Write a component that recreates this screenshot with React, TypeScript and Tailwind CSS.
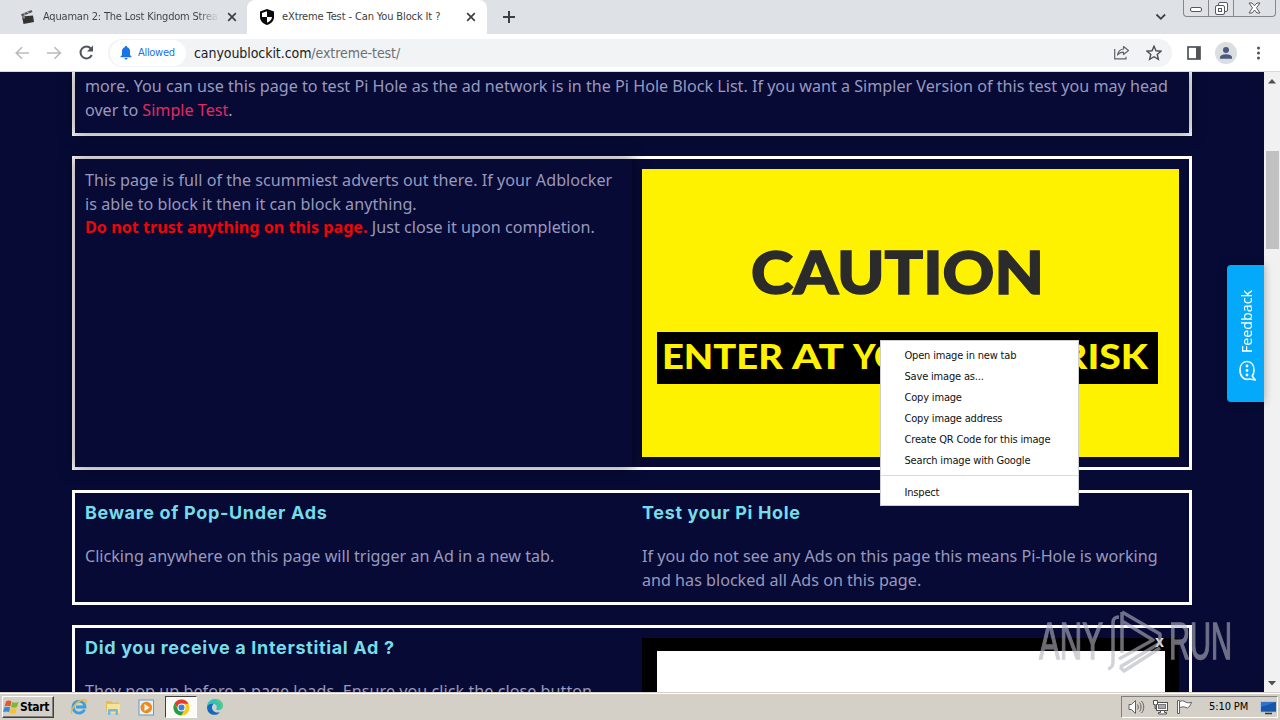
import type { ReactNode } from 'react';

const menuItems = [
  'Open image in new tab',
  'Save image as...',
  'Copy image',
  'Copy image address',
  'Create QR Code for this image',
  'Search image with Google',
];

function Clapper() {
  return (
    <svg width="16" height="16" viewBox="0 0 16 16">
      <path d="M2 7.500 13 6.500 14 13 3.500 15Z" fill="#333" />
      <path d="M1 5.200 11.500 1 12.500 3 2 7.400Z" fill="#555" />
      <path d="m3.500 4.300 2 1.500M7 2.900l2 1.500" stroke="#c9ccd1" strokeWidth="1" />
      <path d="M2 7.700 5 7.400 4.500 10Z" fill="#999" />
    </svg>
  );
}

function Shield() {
  return (
    <svg width="16" height="18" viewBox="0 0 16 18">
      <path d="M8 1 15 3.500V9c0 4-3 6.600-7 8-4-1.400-7-4-7-8V3.500Z" fill="#0a0a0a" />
      <path d="M8 3.200V9H3V5ZM8 9h5c-.3 2.800-2.200 4.600-5 5.800Z" fill="#fff" />
    </svg>
  );
}

function Cross() {
  return (
    <svg width="10" height="10" viewBox="0 0 10 10" stroke="#3c4043" strokeWidth="1.700">
      <path d="m1.200 1.200 7.600 7.600M8.800 1.200 1.200 8.800" />
    </svg>
  );
}

function Tabs() {
  return (
    <div className="flex h-[34px] bg-[#dee1e6] text-[11px] text-[#3c4043]">
      <div className="flex w-[247px] items-center pl-5">
        <Clapper />
        <span className="ml-[7px] w-[176px] overflow-hidden whitespace-nowrap bg-gradient-to-r from-[#3c4043] from-88% to-transparent bg-clip-text pt-px tracking-[-0.2px] text-transparent">
          Aquaman 2: The Lost Kingdom Strea
        </span>
        <span className="ml-[8px]">
          <Cross />
        </span>
      </div>
      <div className="flex w-[240px] items-center rounded-t-[8px] bg-white pl-3">
        <Shield />
        <span className="ml-[7px] w-[184px] whitespace-nowrap pt-px tracking-[-0.12px]">eXtreme Test - Can You Block It ?</span>
        <Cross />
      </div>
      <div className="flex flex-1 items-center pl-[15px]">
        <svg width="14" height="14" viewBox="0 0 14 14" stroke="#3c4043" strokeWidth="2">
          <path d="M7 1v12M1 7h12" />
        </svg>
      </div>
      <div className="flex w-[28px] items-center">
        <svg width="12" height="8" viewBox="0 0 12 8" fill="none" stroke="#3c4043" strokeWidth="1.800">
          <path d="m1.500 1.500 4.300 4.300 4.300-4.300" />
        </svg>
      </div>
      <div className="mr-1 flex h-[17px] w-[93px] rounded-b-[4px] border border-t-0 border-[#85878b]">
        <div className="flex w-[25px] items-end justify-center border-r border-[#85878b] pb-[3px]">
          <svg width="13" height="6" viewBox="0 0 13 6">
            <rect x=".5" y=".5" width="11" height="4" rx="1.500" fill="#fff" stroke="#55585c" />
          </svg>
        </div>
        <div className="flex w-[25px] items-center justify-center border-r border-[#85878b]">
          <svg width="13" height="13" viewBox="0 0 13 13" stroke="#55585c" fill="#fff">
            <rect x="3.500" y=".5" width="9" height="9" rx="1.500" />
            <rect x=".5" y="3.500" width="9" height="9" rx="1.500" />
            <rect x="3.500" y="6.500" width="3" height="3" />
          </svg>
        </div>
        <div className="flex flex-1 items-center justify-center">
          <svg width="13" height="12" viewBox="0 0 13 12">
            <path d="m1 1 3 0 2.500 2.800L9 1h3L8.500 5.800 12 11H9L6.500 8 4 11H1l3.500-5.200Z" fill="#fff" stroke="#55585c" strokeLinejoin="round" />
          </svg>
        </div>
      </div>
    </div>
  );
}

function Toolbar() {
  return (
    <div className="flex h-[38px] items-center border-b border-[#d5d8dc] bg-white">
      <svg className="ml-[15px]" width="15" height="14" viewBox="0 0 15 14" fill="none" stroke="#b8babd" strokeWidth="1.600">
        <path d="M14 7H1.500M7 1.200 1.200 7 7 12.800" />
      </svg>
      <svg className="ml-[17px]" width="15" height="14" viewBox="0 0 15 14" fill="none" stroke="#b8babd" strokeWidth="1.600">
        <path d="M0 7h13M7.500 1.200 13.300 7l-5.800 5.800" />
      </svg>
      <svg className="ml-[17px]" width="15" height="15" viewBox="0 0 15 15" fill="none" stroke="#505357" strokeWidth="2">
        <path d="M12.800 10A5.900 5.900 0 1 1 11.800 3.500" />
        <path d="M14 .5v6H8Z" fill="#505357" stroke="none" />
      </svg>
      <div className="ml-[14px] flex h-[28px] w-[1064px] items-center rounded-full bg-[#f1f3f4] pl-[2px]">
        <div className="flex h-[26px] w-[76px] items-center rounded-full bg-white pl-[10px]">
          <svg width="12" height="14" viewBox="0 0 12 14" fill="#1a73e8">
            <path d="M6 0c.8 0 1.200.5 1.200 1.200C9 1.700 10 3.200 10 5v4l1.500 1.600v.6H.5v-.6L2 9V5c0-1.800 1-3.300 2.800-3.800C4.800.5 5.200 0 6 0ZM4.500 12h3a1.500 1.500 0 0 1-3 0Z" />
          </svg>
          <span className="ml-[6px] pt-px text-[11px] tracking-[-0.3px] text-[#1a73e8]">Allowed</span>
        </div>
        <div className="ml-[8px] flex-1 pt-px text-[14px] tracking-[-0.07px] text-[#202124]">
          canyoublockit.com<span className="text-[#6b6f74]">/extreme-test/</span>
        </div>
        <svg className="mr-[16px]" width="16" height="15" viewBox="0 0 16 15" fill="none" stroke="#5f6368" strokeWidth="1.200">
          <path d="M.7 4v9.800h11.300v-2" />
          <path d="M9.500 1.500 14.500 5.500l-5 4v-2.300c-2.800 0-4.500.8-6 2.800.5-3.200 2.600-5.500 6-6Z" strokeLinejoin="round" />
        </svg>
        <svg className="mr-[10px]" width="16" height="16" viewBox="0 0 16 16" fill="none" stroke="#4b4e52" strokeWidth="1.400">
          <path d="m8 1.200 2 4.600 5 .4-3.800 3.200 1.200 4.900L8 11.700l-4.400 2.600 1.200-4.900L1 6.200l5-.4Z" />
        </svg>
      </div>
      <svg className="ml-[15px]" width="14" height="14" viewBox="0 0 14 14">
        <rect x="1" y="1" width="12" height="12" fill="#fff" stroke="#505357" strokeWidth="1.700" />
        <path d="M9 1h4v12H9Z" fill="#505357" />
      </svg>
      <svg className="ml-[14px]" width="22" height="22" viewBox="0 0 22 22">
        <circle cx="11" cy="11" r="11" fill="#dadde2" />
        <circle cx="11" cy="8" r="3" fill="#4a5a7d" />
        <path d="M5 16.800v-1.500C5 13 9 12.200 11 12.200s6 .8 6 3.100v1.500Z" fill="#4a5a7d" />
      </svg>
      <svg className="ml-[19px]" width="5" height="14" viewBox="0 0 5 14" fill="#505357">
        <circle cx="2.500" cy="2" r="1.500" />
        <circle cx="2.500" cy="7" r="1.500" />
        <circle cx="2.500" cy="12" r="1.500" />
      </svg>
    </div>
  );
}

function Heading({ children }: { children: ReactNode }) {
  return (
    <h2 className="h-[20px] whitespace-nowrap font-[Inter] text-[18px] leading-[20px] font-bold tracking-[0.66px] text-[#75dcea]">
      {children}
    </h2>
  );
}

function Poster() {
  return (
    <svg width="537" height="288" viewBox="0 0 537 288" className="block font-[Lato] font-black">
      <rect width="537" height="288" fill="#fff200" />
      <text x="109" y="124.500" fontSize="59" textLength="293" lengthAdjust="spacingAndGlyphs" fill="#2b2b2b" stroke="#2b2b2b" strokeWidth="1.500">
        CAUTION
      </text>
      <rect x="15" y="163" width="501" height="52" fill="#000" />
      <g fill="#fff200" fontSize="33.500">
        <text x="20" y="200" textLength="121" lengthAdjust="spacingAndGlyphs">ENTER</text>
        <text x="150" y="200" textLength="52" lengthAdjust="spacingAndGlyphs">AT</text>
        <text x="211" y="200" textLength="97" lengthAdjust="spacingAndGlyphs">YOUR</text>
        <text x="318" y="200" textLength="86" lengthAdjust="spacingAndGlyphs">OWN</text>
        <text x="420" y="200" textLength="86" lengthAdjust="spacingAndGlyphs">RISK</text>
      </g>
    </svg>
  );
}

function ContextMenu() {
  return (
    <div className="absolute top-[340px] left-[880px] h-[166px] w-[199px] border border-[#cfcfcf] bg-white pt-1 text-[11px] tracking-[-0.18px] text-[#111]">
      {menuItems.map((item) => (
        <div key={item} className="h-[21px] pl-[23.500px] leading-[22px]">
          {item}
        </div>
      ))}
      <div className="mt-[4px] mb-[5px] h-px bg-[#dadada]" />
      <div className="h-[21px] pl-[23.500px] leading-[23px]">Inspect</div>
    </div>
  );
}

function Watermark() {
  return (
    <svg className="absolute top-[606px] left-[1034px] opacity-60" width="202" height="70" viewBox="0 0 202 70">
      <g className="font-['Liberation_Sans']" fill="#b4b4bf" stroke="#b4b4bf" strokeWidth="1.500" fontSize="51">
        <text x="5" y="53" textLength="64" lengthAdjust="spacingAndGlyphs">ANY</text>
        <text x="135" y="53" textLength="63" lengthAdjust="spacingAndGlyphs">RUN</text>
      </g>
      <g fill="none" stroke="#b4b4bf" strokeWidth="3.500" strokeLinejoin="round">
        <path d="M85 11c-5 0-6 2-6 6v38c0 5-1 7-5 8" />
        <path d="M88 6v41M88 6l38 22v9L86 61M88 15l31 19-34 19M86 61l4 4 36-23" />
      </g>
    </svg>
  );
}

function Page() {
  return (
    <div className="flex h-[620px] overflow-hidden">
      <main className="flex w-[1264px] flex-col bg-[#070a35] pl-[72px] font-['Noto_Sans'] text-[16.140px] leading-[23.800px] text-[#9999bd]">
        <section className="h-[64px] w-[1120px] shrink-0 border-[3px] border-t-0 border-white">
          <div className="h-[61px] pt-[3px] pl-[10px] whitespace-nowrap shadow-[0_0_14px_2px_rgba(0,0,0,0.4)]">
            <p>more. You can use this page to test Pi Hole as the ad network is in the Pi Hole Block List. If you want a Simpler Version of this test you may head</p>
            <p>
              over to <span className="text-[#e02a62]">Simple Test</span>.
            </p>
          </div>
        </section>
        <section className="mt-[20px] flex h-[314px] w-[1120px] shrink-0 border-[3px] border-white">
          <div className="w-[557px] pt-[10px] pl-[10px] tracking-[0.02px] whitespace-nowrap shadow-[0_0_14px_2px_rgba(0,0,0,0.4)]">
            <p>This page is full of the scummiest adverts out there. If your Adblocker</p>
            <p>is able to block it then it can block anything.</p>
            <p className="leading-[21px]">
              <b className="text-[#f00505]">Do not trust anything on this page.</b> Just close it upon completion.
            </p>
          </div>
          <div className="flex-1 pt-[10px] pl-[10px]">
            <Poster />
          </div>
        </section>
        <section className="mt-[20px] flex h-[115px] w-[1120px] shrink-0 border-[3px] border-white pt-[10px] pl-[10px] whitespace-nowrap">
          <div className="w-[557px]">
            <Heading>Beware of Pop-Under Ads</Heading>
            <p className="mt-[22px]">Clicking anywhere on this page will trigger an Ad in a new tab.</p>
          </div>
          <div>
            <Heading>Test your Pi Hole</Heading>
            <p className="mt-[22px]">If you do not see any Ads on this page this means Pi-Hole is working</p>
            <p>and has blocked all Ads on this page.</p>
          </div>
        </section>
        <section className="mt-[20px] flex h-[300px] w-[1120px] shrink-0 border-[3px] border-white pt-[10px] pl-[10px] whitespace-nowrap">
          <div className="w-[557px]">
            <Heading>Did you receive a Interstitial Ad ?</Heading>
            <p className="mt-[22px] tracking-[0.04px]">They pop up before a page loads. Ensure you click the close button</p>
          </div>
          <div className="relative h-[290px] w-[537px] bg-black pt-[13px] pl-[15px]">
            <div className="h-[270px] w-[508px] bg-white" />
            <span className="absolute top-[-8px] left-[513px] font-['Liberation_Sans'] text-[16px] font-bold text-[#e8e8e8]">x</span>
          </div>
        </section>
      </main>
      <div className="flex w-4 flex-col items-center bg-[#f1f1f1]">
        <svg className="mt-[7px]" width="8" height="5" viewBox="0 0 8 5" fill="#505050">
          <path d="M4 0 8 4.500H0Z" />
        </svg>
        <div className="mt-[67px] h-[98px] w-[13px] bg-[#c1c1c1]" />
        <svg className="mt-auto mb-[6px]" width="8" height="5" viewBox="0 0 8 5" fill="#505050">
          <path d="M4 4.500 8 0H0Z" />
        </svg>
      </div>
    </div>
  );
}

function Feedback() {
  return (
    <div className="absolute top-[265px] left-[1227px] flex h-[137px] w-[37px] flex-col items-center rounded-l-[4px] bg-[#04a9fb] pt-[24px] font-['Noto_Sans'] text-[14.200px] leading-[20px] text-white shadow-[0_0_8px_rgba(0,0,0,0.35)]">
      <span className="ml-[3px] h-[64px] rotate-180 [writing-mode:vertical-rl]">Feedback</span>
      <svg className="mt-[7px] ml-[3px]" width="19" height="22" viewBox="0 0 19 22" fill="none" stroke="#fff" strokeWidth="1.600">
        <path d="M9 1.500c4.300 0 7 3.600 7 8.500 0 2.500-.6 4.500-1.800 6l3 4-5.500-1c-5.500 1.600-9.700-2.200-9.700-9 0-4.900 2.700-8.500 7-8.500Z" strokeLinejoin="round" />
        <g fill="#fff" stroke="none">
          <circle cx="9" cy="6" r="1.400" />
          <circle cx="9" cy="10.500" r="1.400" />
          <circle cx="9" cy="15" r="1.400" />
        </g>
      </svg>
    </div>
  );
}

function Taskbar() {
  return (
    <div className="flex h-[28px] border-t border-[#d4d0c8] bg-[#d4d0c8] text-[11px] text-black">
      <div className="flex flex-1 items-center border-t border-white">
        <div className="ml-[2px] flex h-[22px] w-[52px] items-center border border-t-white border-r-[#404040] border-b-[#404040] border-l-white shadow-[inset_-1px_-1px_0_#808080]">
          <svg width="17" height="16" viewBox="0 0 17 16">
            <path d="M3 2.500C5 1 7 1.500 8.500 2.500L7.300 7.500C5.500 6.500 3.500 6.500 1.500 7.500Z" fill="#e8562a" />
            <path d="M9.300 3c2 1 4 1 6.200 0L14 8c-2 1-4 1-6 0Z" fill="#7ab83a" />
            <path d="M1.300 8.400c2-1 4-1 5.900 0L6 13.300c-2-1-4-1-6 0Z" fill="#3a88d8" />
            <path d="M7.900 9c2 1 4 1 6 0l-1.300 5c-2 1-4 1-6 0Z" fill="#f8c22e" />
          </svg>
          <b className="text-[12px] tracking-[-0.3px]">Start</b>
        </div>
        <svg className="ml-[16px]" width="18" height="18" viewBox="0 0 18 18" fill="none">
          <path d="M14.500 11.500A6 6 0 1 1 15 9H6" stroke="#3d9fe0" strokeWidth="2.800" />
          <path d="M2 16C-1 13 7 2 14 1.500c3-.2 2.800 2 1.500 4" stroke="#f0b93a" strokeWidth="1.400" />
        </svg>
        <svg className="ml-[16px]" width="18" height="18" viewBox="0 0 18 18">
          <path d="M2 3h5l1 1.500h7V14H2Z" fill="#e3bd55" />
          <path d="M3 6h13v9H3Z" fill="#f7e395" />
          <path d="M4 17v-4.500c0-1 .7-1.500 1.500-1.500h7c.8 0 1.500.5 1.500 1.500V17h-2.500v-3.500h-5V17Z" fill="#72b9e3" />
        </svg>
        <svg className="ml-[16px]" width="17" height="17" viewBox="0 0 17 17">
          <rect x="1" y="1" width="14.500" height="15" fill="#e8f0f8" stroke="#619ccc" />
          <circle cx="8.300" cy="8.500" r="5.800" fill="#f08a1c" />
          <path d="m6.500 5 5.200 3.500L6.500 12Z" fill="#fff" />
        </svg>
        <div className="ml-[10px] flex h-[22px] w-[32px] items-center justify-center border border-t-[#404040] border-r-white border-b-white border-l-[#404040] bg-[#fbfaf8]">
          <svg width="17" height="17" viewBox="0 0 17 17">
            <circle cx="8.500" cy="8.500" r="8" fill="#fbc916" />
            <path d="M1.500 4.500A8 8 0 0 1 15.500 4.700H8.500L6 11Z" fill="#e33b2e" />
            <path d="M1.500 4.500A8 8 0 0 0 8.200 16.500L11.500 11 5 10.300Z" fill="#269c4b" />
            <circle cx="8.500" cy="8.500" r="4" fill="#fff" />
            <circle cx="8.500" cy="8.500" r="3" fill="#3d7de8" />
          </svg>
        </div>
        <svg className="ml-[9px]" width="18" height="18" viewBox="0 0 18 18">
          <path d="M1 9c0-5 3.700-8 8-8 4.800 0 8 3.200 8 6.800 0 2.700-2 4.400-4.500 4.400-1.800 0-2.700-.7-2.200-1.600C12 7.500 9 5.500 6.500 6 4 6.300 2 7.500 1 9Z" fill="#35c1b5" />
          <path d="M1 9c1-2.500 4-3.700 6.500-3 0 0-1.800 1.500-1.500 4 .3 3 3.700 5.500 8 4.300C11 18.500 1 18 1 9Z" fill="#1369bd" />
          <path d="M9 1c4.800 0 8 3.200 8 6.800 0 2.700-2 4.400-4.500 4.400L15 7Z" fill="#62cf70" opacity=".7" />
        </svg>
      </div>
      <div className="flex w-[159px] items-center border-t border-white">
        <div className="flex h-[22px] w-[157px] items-center border border-t-[#808080] border-r-white border-b-white border-l-[#808080]">
          <svg className="ml-[6px]" width="17" height="16" viewBox="0 0 17 16" stroke="#606060" fill="#fff">
            <path d="M1 5.500h2.500L7.500 1.500v13l-4-4H1Z" />
            <path d="M9.500 5.500c1 1.500 1 3.500 0 5M11.500 3.500c2 2.500 2 6.500 0 9M13.500 2c3 3.500 3 8.500 0 12" fill="none" />
          </svg>
          <svg className="ml-[7px]" width="17" height="16" viewBox="0 0 17 16" stroke="#505050" fill="#fff">
            <rect x="4.500" y="3.500" width="11" height="8" />
            <rect x="6.500" y="5.500" width="7" height="4" fill="#aaa" stroke="#777" />
            <path d="M8.500 11.500h4v2h2v1.500h-8v-1.500h2Z" />
            <path d="M1.500 1.500h4v4h-1.500v4H3v-4H1.500Z" />
          </svg>
          <svg className="ml-[7px]" width="17" height="16" viewBox="0 0 17 16" stroke="#606060" fill="#fff">
            <path d="M1.500 1.500h2v13h-2Z" />
            <path d="M3.500 2.500c2-1 4-1 6 .5 2 1 4 1 6 .3-1 3-2.500 5-4 5.700-2-.5-3.500-2-8-.5Z" />
          </svg>
          <span className="ml-[16px] w-[51px] whitespace-nowrap pt-px tracking-[-0.1px]">5:10 PM</span>
          <svg width="17" height="15" viewBox="0 0 17 15">
            <rect x=".5" y="1.500" width="15.500" height="10.500" fill="#2a74d0" stroke="#b3c6dd" />
            <path d="M1 7C6 5 11 4 16 2v9.500H1Z" fill="#1756a8" />
            <path d="M5 13.500h7" stroke="#333" strokeWidth="1.500" />
          </svg>
        </div>
      </div>
    </div>
  );
}

export default function App() {
  return (
    <div className="relative h-[720px] w-[1280px] overflow-hidden bg-white font-['DejaVu_Sans_Condensed','DejaVu_Sans',sans-serif]">
      <Tabs />
      <Toolbar />
      <Page />
      <Taskbar />
      <Feedback />
      <Watermark />
      <ContextMenu />
    </div>
  );
}
